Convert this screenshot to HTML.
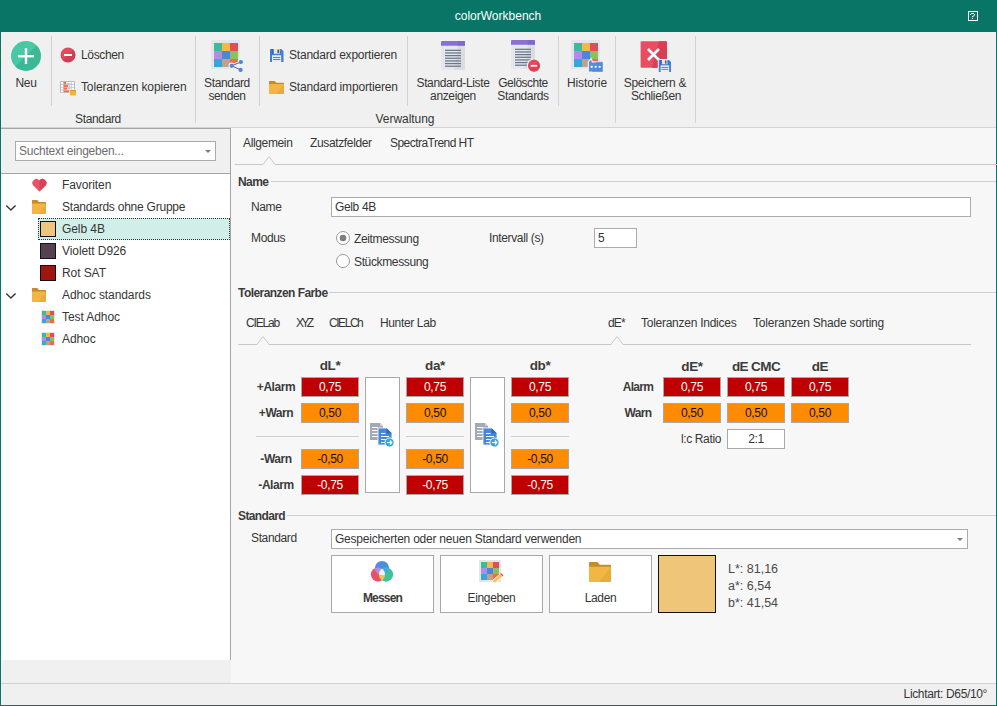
<!DOCTYPE html>
<html><head><meta charset="utf-8">
<style>
*{box-sizing:border-box}
html,body{margin:0;padding:0}
body{width:997px;height:706px;position:relative;overflow:hidden;background:#087566;font-family:"Liberation Sans",sans-serif;font-size:12px;letter-spacing:-0.36px;color:#363636}
.a{position:absolute}
.t{position:absolute;line-height:14px;white-space:nowrap}
.c{text-align:center}
.b{font-weight:bold;color:#3c3c3c}
.sep{position:absolute;width:1px;background:#d2d2d2}
.hl{position:absolute;height:1px;background:#cfcfcf}
.box{position:absolute;width:58px;height:20px;border:1px solid #a8a8a8;text-align:center;line-height:18px;font-size:12px}
.r{background:#c00000;color:#fff}
.o{background:#ff8c00;color:#111}
.inp{position:absolute;background:#fff;border:1px solid #ababab}
.grid{position:absolute;display:grid;grid-template-columns:repeat(3,1fr);grid-template-rows:repeat(3,1fr)}
.grid i{display:block}
</style></head><body>
<!-- title bar -->
<div class="a" style="left:0;top:0;width:997px;height:32px;background:#087566"></div>
<div class="t c" style="left:398px;top:9px;width:200px;color:#fff;font-size:12px;letter-spacing:0">colorWorkbench</div>
<svg class="a" style="left:968px;top:11px" width="10" height="10" viewBox="0 0 10 10" >
 <rect x="0.5" y="0.5" width="9" height="9" fill="none" stroke="#fff"/>
 <g fill="#fff"><rect x="3" y="2" width="3" height="1"/><rect x="6" y="3" width="1" height="1.5"/><rect x="5" y="4.5" width="1" height="1"/><rect x="4" y="5" width="1" height="1.2"/><rect x="4" y="7" width="1" height="1"/><rect x="2" y="3" width="1" height="1"/></g>
</svg>

<!-- ribbon -->
<div class="a" style="left:1px;top:32px;width:995px;height:95px;background:#f0f0f0"></div>
<div class="a" style="left:1px;top:127px;width:995px;height:1px;background:#d4d4d4"></div>

<div class="sep" style="left:51px;top:36px;height:70px"></div>
<div class="sep" style="left:195px;top:36px;height:87px"></div>
<div class="sep" style="left:259px;top:36px;height:70px"></div>
<div class="sep" style="left:407px;top:36px;height:70px"></div>
<div class="sep" style="left:558px;top:36px;height:70px"></div>
<div class="sep" style="left:615px;top:36px;height:87px"></div>
<div class="sep" style="left:695px;top:36px;height:87px"></div>

<!-- Neu -->
<svg class="a" style="left:11px;top:41px" width="30" height="30" viewBox="0 0 30 30">
 <circle cx="15" cy="15" r="15" fill="#47c9a5"/>
 <path d="M25.6 4.4 A15 15 0 0 1 4.4 25.6 Z" fill="#3cb896"/>
 <rect x="7" y="14" width="16" height="2.4" fill="#fff"/><rect x="13.8" y="7" width="2.4" height="16" fill="#fff"/>
</svg>
<div class="t c" style="left:6px;top:76px;width:40px">Neu</div>

<!-- Löschen -->
<svg class="a" style="left:60px;top:47px" width="16" height="16" viewBox="0 0 16 16">
 <circle cx="8" cy="8" r="7.5" fill="#e4495c"/><path d="M13.3 2.7 A7.5 7.5 0 0 1 2.7 13.3Z" fill="#d13f52"/>
 <rect x="4" y="7" width="8" height="2" fill="#fff"/>
</svg>
<div class="t" style="left:81px;top:48px">Löschen</div>

<!-- Toleranzen kopieren -->
<svg class="a" style="left:60px;top:81px" width="17" height="15" viewBox="0 0 17 15">
 <rect x="0" y="0" width="15" height="12" rx="1.2" fill="#b3bac5"/>
 <g fill="#fff"><rect x="1" y="1" width="13" height="2.2"/><rect x="1" y="3.9" width="13" height="2"/><rect x="1" y="6.6" width="13" height="2"/><rect x="1" y="9.4" width="13" height="1.8"/></g>
 <g fill="#b9c0ca"><rect x="3" y="1" width="0.6" height="10.2"/><rect x="11" y="1" width="0.6" height="10.2"/></g>
 <g fill="#f26b4a"><rect x="3.6" y="1" width="2.6" height="2.2"/><rect x="3.6" y="3.9" width="4.6" height="2"/><rect x="3.6" y="6.6" width="3.6" height="2"/><rect x="3.6" y="9.4" width="5.4" height="1.8"/></g>
 <g fill="#9aa2ae"><rect x="7" y="2" width="3.5" height="0.6"/><rect x="9" y="4.6" width="1.5" height="0.8"/><rect x="8" y="7.4" width="2.5" height="0.6"/></g>
 <rect x="9.5" y="8.5" width="7.5" height="6.5" fill="#f0f0f0"/>
 <path d="M10 9 H12.5 L13.2 9.8 H16 V14.5 H10Z" fill="#f0b53c"/><rect x="10" y="9" width="6" height="1.2" fill="#d9a030"/>
</svg>
<div class="t" style="left:81px;top:80px;letter-spacing:-0.14px">Toleranzen kopieren</div>
<div class="t c" style="left:48px;top:112px;width:100px">Standard</div>

<!-- Standard senden -->
<div class="a" style="left:211px;top:40px;width:29px;height:29px;background:#e3e5ea"></div>
<div class="grid" style="left:214px;top:43px;width:24px;height:24px">
 <i style="background:#3dba97"></i><i style="background:#f5b843"></i><i style="background:#e14b5a"></i>
 <i style="background:#b18de6"></i><i style="background:#4a86d9"></i><i style="background:#8bc15a"></i>
 <i style="background:#33a9d9"></i><i style="background:#c4a186"></i><i style="background:#ee6a4a"></i>
</div>
<svg class="a" style="left:228px;top:58px" width="16" height="15" viewBox="0 0 16 15">
 <g stroke="#f0f0f0" stroke-width="2" fill="#f0f0f0"><path d="M3.7 7.8 L12.9 4 L12.6 11.9Z" stroke-width="3"/><circle cx="3.7" cy="7.8" r="2.2"/><circle cx="12.9" cy="4" r="2.2"/><circle cx="12.6" cy="11.9" r="2.2"/></g>
 <path d="M3.7 7.8 L12.9 4 M3.7 7.8 L12.6 11.9" stroke="#3d5a80" stroke-width="0.9" fill="none"/>
 <circle cx="3.7" cy="7.8" r="2.1" fill="#4a86dc"/><circle cx="12.9" cy="4" r="2.1" fill="#4a86dc"/><circle cx="12.6" cy="11.9" r="2.1" fill="#4a86dc"/>
</svg>
<div class="t c" style="left:187px;top:76px;width:80px">Standard</div>
<div class="t c" style="left:187px;top:89px;width:80px">senden</div>

<!-- export/import -->
<svg class="a" style="left:270px;top:49px" width="14" height="13" viewBox="0 0 14 13">
 <path d="M0 0 H11.2 L13.5 2.3 V13 H0Z" fill="#3f7ed8"/><rect x="1.8" y="0" width="2" height="5" fill="#2f69bd"/>
 <rect x="3.8" y="0" width="6" height="4.8" fill="#e3e6ec"/><rect x="7.4" y="0.6" width="1.7" height="3.6" fill="#555b66"/>
 <rect x="2" y="6.2" width="9.2" height="6.8" fill="#e8ebf0"/><rect x="3" y="8" width="7.2" height="1" fill="#6d7a8f"/><rect x="3" y="10" width="7.2" height="1" fill="#6d7a8f"/>
</svg>
<div class="t" style="left:289px;top:48px;letter-spacing:-0.21px">Standard exportieren</div>
<svg class="a" style="left:269px;top:81px" width="15" height="13" viewBox="0 0 14 14" preserveAspectRatio="none">
 <path d="M0 0.3 Q0 0 0.3 0 H5.3 L6.9 1.9 H13.7 Q14 1.9 14 2.2 V4 H0Z" fill="#c58b2c"/>
 <rect x="0" y="3.4" width="14" height="10.6" rx="0.3" fill="#f3b642"/>
 <path d="M14 3.4 V14 H6.5 Z" fill="#e4a838" opacity="0.7"/>
</svg>
<div class="t" style="left:289px;top:80px;letter-spacing:-0.16px">Standard importieren</div>

<!-- Standard-Liste -->
<svg class="a" style="left:441px;top:41px" width="24" height="29" viewBox="0 0 24 29">
 <rect x="0" y="0" width="24" height="29" rx="1" fill="#e4e7eb"/><path d="M17 4.7 H24 V28 Q24 29 23 29 H13Z" fill="#d9dce1"/><path d="M0 1 Q0 0 1 0 H23 Q24 0 24 1 V4.7 H0Z" fill="#8a6fd8"/><path d="M17 0 H23 Q24 0 24 1 V4.7 H16.6Z" fill="#7b5fcb" opacity="0.6"/><g fill="#6b7689"><rect x="4" y="8.70" width="16" height="1.25"/><rect x="4" y="11.35" width="16" height="1.25"/><rect x="4" y="14.00" width="16" height="1.25"/><rect x="4" y="16.65" width="16" height="1.25"/><rect x="4" y="19.30" width="16" height="1.25"/><rect x="4" y="21.95" width="16" height="1.25"/><rect x="4" y="24.60" width="16" height="1.25"/></g>
</svg>
<div class="t c" style="left:403px;top:76px;width:100px">Standard-Liste</div>
<div class="t c" style="left:403px;top:89px;width:100px">anzeigen</div>

<!-- Gelöschte -->
<svg class="a" style="left:511px;top:40px" width="31" height="33" viewBox="0 0 31 33">
 <rect x="0" y="0" width="24" height="29" rx="1" fill="#e4e7eb"/><path d="M17 4.7 H24 V28 Q24 29 23 29 H13Z" fill="#d9dce1"/><path d="M0 1 Q0 0 1 0 H23 Q24 0 24 1 V4.7 H0Z" fill="#8a6fd8"/><path d="M17 0 H23 Q24 0 24 1 V4.7 H16.6Z" fill="#7b5fcb" opacity="0.6"/><g fill="#6b7689"><rect x="4" y="8.70" width="16" height="1.25"/><rect x="4" y="11.35" width="16" height="1.25"/><rect x="4" y="14.00" width="16" height="1.25"/><rect x="4" y="16.65" width="16" height="1.25"/><rect x="4" y="19.30" width="16" height="1.25"/><rect x="4" y="21.95" width="16" height="1.25"/><rect x="4" y="24.60" width="16" height="1.25"/></g>
 <circle cx="23" cy="25.7" r="7.2" fill="#f0f0f0"/><circle cx="23" cy="25.7" r="6.1" fill="#e4495c"/><path d="M27.3 21.4 A6.1 6.1 0 0 1 18.7 30Z" fill="#d63f52" opacity="0.7"/><rect x="19.8" y="24.9" width="6.4" height="1.7" fill="#fff"/>
</svg>
<div class="t c" style="left:473px;top:76px;width:100px;letter-spacing:-0.5px">Gelöschte</div>
<div class="t c" style="left:473px;top:89px;width:100px">Standards</div>

<!-- Historie -->
<div class="a" style="left:571px;top:40px;width:29px;height:29px;background:#e3e5ea"></div>
<div class="grid" style="left:574px;top:43px;width:24px;height:24px">
 <i style="background:#3dba97"></i><i style="background:#f5b843"></i><i style="background:#e14b5a"></i>
 <i style="background:#b18de6"></i><i style="background:#4a86d9"></i><i style="background:#8bc15a"></i>
 <i style="background:#33a9d9"></i><i style="background:#c4a186"></i><i style="background:#ee6a4a"></i>
</div>
<svg class="a" style="left:587px;top:57px" width="18" height="17" viewBox="0 0 18 17">
 <path d="M1.3 4.8 L4.2 1.6 L5.4 4.8 H15.2 Q16 4.8 16 5.6 V14.2 Q16 15 15.2 15 H2.1 Q1.3 15 1.3 14.2Z" fill="#5590e0" stroke="#f0f0f0" stroke-width="1.2"/>
 <path d="M9 4.8 H15.2 Q16 4.8 16 5.6 V14.2 Q16 15 15.2 15 H5Z" fill="#4a86d9" opacity="0.6"/>
 <circle cx="4.7" cy="9.8" r="1.15" fill="#fff"/><circle cx="8.7" cy="9.8" r="1.15" fill="#fff"/><circle cx="12.7" cy="9.8" r="1.15" fill="#fff"/>
</svg>
<div class="t c" style="left:547px;top:76px;width:80px;letter-spacing:-0.06px">Historie</div>

<!-- Speichern & Schließen -->
<svg class="a" style="left:640px;top:41px" width="32" height="32" viewBox="0 0 32 32">
 <rect x="0.6" y="0.2" width="26.4" height="26.6" rx="1" fill="#e94d62"/><path d="M19 0.2 H26 Q27 0.2 27 1.2 V25.8 Q27 26.8 26 26.8 H12Z" fill="#d83e54"/>
 <path d="M8 8 L19 19 M19 8 L8 19" stroke="#fff" stroke-width="2.6"/>
 <rect x="17.8" y="18" width="13.2" height="14" fill="#f0f0f0"/>
 <path d="M18.8 19 H29 L31 21 V31 H18.8Z" fill="#3f7ed8"/><rect x="20.3" y="19" width="1.6" height="4.5" fill="#2f69bd"/>
 <rect x="21.9" y="19" width="5.5" height="4.2" fill="#e3e6ec"/><rect x="25" y="19.5" width="1.5" height="3.2" fill="#555b66"/>
 <rect x="20.6" y="24.4" width="8.6" height="6.6" fill="#e8ebf0"/><rect x="21.5" y="26" width="6.8" height="0.9" fill="#6d7a8f"/><rect x="21.5" y="27.9" width="6.8" height="0.9" fill="#6d7a8f"/>
</svg>
<div class="t c" style="left:605px;top:76px;width:100px;letter-spacing:-0.24px">Speichern &amp;</div>
<div class="t c" style="left:606px;top:89px;width:100px">Schließen</div>
<div class="t c" style="left:355px;top:112px;width:100px;letter-spacing:-0.04px">Verwaltung</div>

<!-- main area backgrounds -->
<div class="a" style="left:1px;top:128px;width:230px;height:1px;background:#a5a5a5"></div>
<div class="a" style="left:230px;top:128px;width:1px;height:532px;background:#a5a5a5"></div>
<div class="a" style="left:1px;top:129px;width:229px;height:44px;background:#f0f0f0"></div>
<div class="a" style="left:1px;top:173px;width:229px;height:1px;background:#a5a5a5"></div>
<div class="a" style="left:1px;top:174px;width:229px;height:486px;background:#fff"></div>
<div class="a" style="left:1px;top:660px;width:230px;height:23px;background:#f0f0f0"></div>
<div class="a" style="left:231px;top:128px;width:765px;height:555px;background:#f7f7f7"></div>

<!-- status bar -->
<div class="a" style="left:1px;top:683px;width:995px;height:1px;background:#d0d0d0"></div>
<div class="a" style="left:1px;top:684px;width:995px;height:21px;background:#f0f0f0"></div>
<div class="t" style="left:887px;top:687px;width:100px;text-align:right">Lichtart: D65/10°</div>

<!-- left panel -->
<div class="inp" style="left:15px;top:141px;width:201px;height:20px"></div>
<div class="t" style="left:19px;top:144px;color:#6d6d6d;letter-spacing:-0.24px">Suchtext eingeben...</div>
<div class="a" style="left:205px;top:150px;width:0;height:0;border-left:3.5px solid transparent;border-right:3.5px solid transparent;border-top:3px solid #7a7a7a"></div>

<svg class="a" style="left:31px;top:178px" width="17" height="15" viewBox="0 0 17 15">
 <defs><clipPath id="hr"><rect x="8.4" y="0" width="9" height="15"/></clipPath></defs>
 <path d="M8.4 13.6 L2.2 7.4 A3.9 3.9 0 0 1 8.4 2.6 A3.9 3.9 0 0 1 14.6 7.4 Z" fill="#ea5367"/>
 <path d="M8.4 13.6 L2.2 7.4 A3.9 3.9 0 0 1 8.4 2.6 A3.9 3.9 0 0 1 14.6 7.4 Z" fill="#d84457" clip-path="url(#hr)"/>
</svg>
<div class="t" style="left:62px;top:178px;letter-spacing:-0.08px">Favoriten</div>

<svg class="a" style="left:5px;top:204px" width="12" height="8" viewBox="0 0 12 8"><path d="M1.2 1.4 L5.9 6 L10.6 1.4" stroke="#3a3a3a" stroke-width="1.45" fill="none"/></svg>
<svg class="a" style="left:32px;top:200px" width="14" height="14" viewBox="0 0 14 14" preserveAspectRatio="none">
 <path d="M0 0.3 Q0 0 0.3 0 H5.3 L6.9 1.9 H13.7 Q14 1.9 14 2.2 V4 H0Z" fill="#c58b2c"/>
 <rect x="0" y="3.4" width="14" height="10.6" rx="0.3" fill="#f3b642"/>
 <path d="M14 3.4 V14 H6.5 Z" fill="#e4a838" opacity="0.7"/>
</svg>
<div class="t" style="left:62px;top:200px;letter-spacing:-0.23px">Standards ohne Gruppe</div>

<div class="a" style="left:38px;top:218px;width:192px;height:22px;background:#d1eee9;border:1px dotted #333"></div>
<div class="a" style="left:40px;top:221px;width:16px;height:16px;background:#f0c67c;border:1.5px solid #111"></div>
<div class="t" style="left:62px;top:222px;letter-spacing:-0.08px">Gelb 4B</div>
<div class="a" style="left:40px;top:243px;width:16px;height:16px;background:#55414f;border:1.5px solid #111"></div>
<div class="t" style="left:62px;top:244px;letter-spacing:-0.08px">Violett D926</div>
<div class="a" style="left:40px;top:265px;width:16px;height:16px;background:#a0150f;border:1.5px solid #111"></div>
<div class="t" style="left:62px;top:266px;letter-spacing:-0.08px">Rot SAT</div>

<svg class="a" style="left:5px;top:292px" width="12" height="8" viewBox="0 0 12 8"><path d="M1.2 1.4 L5.9 6 L10.6 1.4" stroke="#3a3a3a" stroke-width="1.45" fill="none"/></svg>
<svg class="a" style="left:32px;top:288px" width="14" height="14" viewBox="0 0 14 14" preserveAspectRatio="none">
 <path d="M0 0.3 Q0 0 0.3 0 H5.3 L6.9 1.9 H13.7 Q14 1.9 14 2.2 V4 H0Z" fill="#c58b2c"/>
 <rect x="0" y="3.4" width="14" height="10.6" rx="0.3" fill="#f3b642"/>
 <path d="M14 3.4 V14 H6.5 Z" fill="#e4a838" opacity="0.7"/>
</svg>
<div class="t" style="left:62px;top:288px;letter-spacing:-0.08px">Adhoc standards</div>

<div class="a" style="left:41px;top:310px;width:14px;height:14px;background:#e3e5ea"></div>
<div class="grid" style="left:42px;top:311px;width:12px;height:12px">
 <i style="background:#3dba97"></i><i style="background:#f5b843"></i><i style="background:#e14b5a"></i>
 <i style="background:#b18de6"></i><i style="background:#4a86d9"></i><i style="background:#8bc15a"></i>
 <i style="background:#33a9d9"></i><i style="background:#c4a186"></i><i style="background:#ee6a4a"></i>
</div>
<div class="t" style="left:62px;top:310px;letter-spacing:-0.08px">Test Adhoc</div>
<div class="a" style="left:41px;top:332px;width:14px;height:14px;background:#e3e5ea"></div>
<div class="grid" style="left:42px;top:333px;width:12px;height:12px">
 <i style="background:#3dba97"></i><i style="background:#f5b843"></i><i style="background:#e14b5a"></i>
 <i style="background:#b18de6"></i><i style="background:#4a86d9"></i><i style="background:#8bc15a"></i>
 <i style="background:#33a9d9"></i><i style="background:#c4a186"></i><i style="background:#ee6a4a"></i>
</div>
<div class="t" style="left:62px;top:332px;letter-spacing:-0.08px">Adhoc</div>

<!-- RIGHT CONTENT -->
<div class="t" style="left:243px;top:136px">Allgemein</div>
<div class="t" style="left:310px;top:136px">Zusatzfelder</div>
<div class="t" style="left:390px;top:136px;letter-spacing:-0.54px">SpectraTrend HT</div>
<svg class="a" style="left:231px;top:150px" width="766" height="20" viewBox="0 0 766 20">
 <path d="M4 14.5 H32 L38 6.5 L44 14.5 H766" stroke="#c8c8c8" stroke-width="1" fill="none"/>
</svg>

<div class="t b" style="left:238px;top:175px;letter-spacing:-0.6px">Name</div>
<div class="hl" style="left:271px;top:181px;width:725px"></div>
<div class="t" style="left:251px;top:200px">Name</div>
<div class="inp" style="left:331px;top:197px;width:640px;height:20px"></div>
<div class="t" style="left:335px;top:200px">Gelb 4B</div>
<div class="t" style="left:251px;top:231px">Modus</div>
<svg class="a" style="left:336px;top:231px" width="14" height="37" viewBox="0 0 14 37">
 <circle cx="7" cy="7" r="6.5" fill="#fff" stroke="#9a9a9a"/><circle cx="7" cy="7" r="3.3" fill="#7d7d7d"/>
 <circle cx="7" cy="30" r="6.5" fill="#fff" stroke="#9a9a9a"/>
</svg>
<div class="t" style="left:354px;top:232px">Zeitmessung</div>
<div class="t" style="left:354px;top:255px">Stückmessung</div>
<div class="t" style="left:489px;top:231px">Intervall (s)</div>
<div class="inp" style="left:594px;top:228px;width:43px;height:20px"></div>
<div class="t" style="left:598px;top:231px">5</div>

<div class="t b" style="left:238px;top:286px;letter-spacing:-0.56px">Toleranzen Farbe</div>
<div class="hl" style="left:329px;top:292px;width:667px"></div>

<div class="t" style="left:246px;top:316px;letter-spacing:-1.16px">CIELab</div>
<div class="t" style="left:296px;top:316px;letter-spacing:-2.6px">XYZ</div>
<div class="t" style="left:329px;top:316px;letter-spacing:-1.45px">CIELCh</div>
<div class="t" style="left:380px;top:316px">Hunter Lab</div>
<div class="t" style="left:608px;top:316px;letter-spacing:-0.9px">dE*</div>
<div class="t" style="left:641px;top:316px;letter-spacing:-0.26px">Toleranzen Indices</div>
<div class="t" style="left:753px;top:316px;letter-spacing:-0.21px">Toleranzen Shade sorting</div>
<svg class="a" style="left:231px;top:330px" width="766" height="20" viewBox="0 0 766 20">
 <path d="M7 14.5 H26 L32 6.5 L38 14.5 H380 L386 6.5 L392 14.5 H740" stroke="#c8c8c8" stroke-width="1" fill="none"/>
</svg>

<div class="t c b" style="left:300px;top:359px;width:60px;font-size:13.5px;letter-spacing:-0.4px">dL*</div>
<div class="t c b" style="left:405px;top:359px;width:60px;font-size:13.5px;letter-spacing:-0.4px">da*</div>
<div class="t c b" style="left:510px;top:359px;width:60px;font-size:13.5px;letter-spacing:-0.4px">db*</div>

<div class="t c b" style="left:246px;top:380px;width:60px;letter-spacing:-0.45px">+Alarm</div>
<div class="t c b" style="left:246px;top:406px;width:60px;letter-spacing:-0.45px">+Warn</div>
<div class="t c b" style="left:246px;top:452px;width:60px;letter-spacing:-0.45px">-Warn</div>
<div class="t c b" style="left:246px;top:478px;width:60px;letter-spacing:-0.45px">-Alarm</div>

<div class="hl" style="left:256px;top:436px;width:103px"></div>
<div class="hl" style="left:406px;top:436px;width:58px"></div>
<div class="hl" style="left:511px;top:436px;width:58px"></div>

<div class="box r" style="left:301px;top:377px">0,75</div>
<div class="box o" style="left:301px;top:403px">0,50</div>
<div class="box o" style="left:301px;top:449px">-0,50</div>
<div class="box r" style="left:301px;top:475px">-0,75</div>
<div class="box r" style="left:406px;top:377px">0,75</div>
<div class="box o" style="left:406px;top:403px">0,50</div>
<div class="box o" style="left:406px;top:449px">-0,50</div>
<div class="box r" style="left:406px;top:475px">-0,75</div>
<div class="box r" style="left:511px;top:377px">0,75</div>
<div class="box o" style="left:511px;top:403px">0,50</div>
<div class="box o" style="left:511px;top:449px">-0,50</div>
<div class="box r" style="left:511px;top:475px">-0,75</div>

<div class="a" style="left:365px;top:377px;width:35px;height:116px;background:#fff;border:1px solid #a8a8a8"></div>
<div class="a" style="left:470px;top:377px;width:35px;height:116px;background:#fff;border:1px solid #a8a8a8"></div>
<svg class="a" style="left:370px;top:422px" width="24" height="26" viewBox="0 0 24 26">
 <path d="M0 1 H10 L13 4 V18 H0Z" fill="#a3a9b5"/><path d="M10 1 L13 4 H10Z" fill="#cdd2d9"/><g fill="#fff"><rect x="2" y="5" width="6" height="1"/><rect x="2" y="8" width="6" height="1"/><rect x="2" y="11" width="6" height="1"/><rect x="2" y="14" width="6" height="1"/></g>
 <path d="M8 6 H16.5 L22 11.5 V23 H8Z" fill="#4a86d9" stroke="#fff" stroke-width="0.8"/><path d="M16.5 6 L22 11.5 H16.5Z" fill="#3169bd"/><g fill="#fff"><rect x="11" y="11" width="4.5" height="1"/><rect x="11" y="14" width="8" height="1"/><rect x="11" y="17" width="7" height="1"/><rect x="11" y="20" width="5" height="1"/></g>
 <circle cx="19.5" cy="20.5" r="4.6" fill="#33a9d9" stroke="#fff" stroke-width="0.9"/><path d="M17 20.5 H21.8 M19.9 18.5 L21.9 20.5 L19.9 22.5" stroke="#fff" stroke-width="1.1" fill="none"/>
</svg>
<svg class="a" style="left:475px;top:422px" width="24" height="26" viewBox="0 0 24 26">
 <path d="M0 1 H10 L13 4 V18 H0Z" fill="#a3a9b5"/><path d="M10 1 L13 4 H10Z" fill="#cdd2d9"/><g fill="#fff"><rect x="2" y="5" width="6" height="1"/><rect x="2" y="8" width="6" height="1"/><rect x="2" y="11" width="6" height="1"/><rect x="2" y="14" width="6" height="1"/></g>
 <path d="M8 6 H16.5 L22 11.5 V23 H8Z" fill="#4a86d9" stroke="#fff" stroke-width="0.8"/><path d="M16.5 6 L22 11.5 H16.5Z" fill="#3169bd"/><g fill="#fff"><rect x="11" y="11" width="4.5" height="1"/><rect x="11" y="14" width="8" height="1"/><rect x="11" y="17" width="7" height="1"/><rect x="11" y="20" width="5" height="1"/></g>
 <circle cx="19.5" cy="20.5" r="4.6" fill="#33a9d9" stroke="#fff" stroke-width="0.9"/><path d="M17 20.5 H21.8 M19.9 18.5 L21.9 20.5 L19.9 22.5" stroke="#fff" stroke-width="1.1" fill="none"/>
</svg>

<!-- dE -->
<div class="t c b" style="left:662px;top:360px;width:60px;font-size:13.5px;letter-spacing:-0.4px">dE*</div>
<div class="t c b" style="left:721px;top:360px;width:70px;font-size:13.5px;letter-spacing:-0.6px">dE CMC</div>
<div class="t c b" style="left:790px;top:360px;width:60px;font-size:13.5px;letter-spacing:-0.4px">dE</div>
<div class="t c b" style="left:608px;top:380px;width:60px;letter-spacing:-0.66px">Alarm</div>
<div class="t c b" style="left:608px;top:406px;width:60px;letter-spacing:-0.66px">Warn</div>
<div class="box r" style="left:663px;top:377px">0,75</div>
<div class="box r" style="left:727px;top:377px">0,75</div>
<div class="box r" style="left:791px;top:377px">0,75</div>
<div class="box o" style="left:663px;top:403px">0,50</div>
<div class="box o" style="left:727px;top:403px">0,50</div>
<div class="box o" style="left:791px;top:403px">0,50</div>
<div class="t" style="left:621px;top:432px;width:100px;text-align:right">l:c Ratio</div>
<div class="box" style="left:727px;top:429px;height:20px;background:#fff;line-height:18px">2:1</div>

<!-- Standard -->
<div class="t b" style="left:238px;top:509px;letter-spacing:-0.62px">Standard</div>
<div class="hl" style="left:287px;top:515px;width:709px"></div>
<div class="t" style="left:251px;top:531px">Standard</div>
<div class="inp" style="left:331px;top:529px;width:637px;height:20px"></div>
<div class="t" style="left:335px;top:532px;letter-spacing:-0.23px">Gespeicherten oder neuen Standard verwenden</div>
<div class="a" style="left:957px;top:538px;width:0;height:0;border-left:3px solid transparent;border-right:3px solid transparent;border-top:3px solid #7a7a7a"></div>

<div class="inp" style="left:331px;top:555px;width:103px;height:58px;border-color:#a8a8a8"></div>
<div class="inp" style="left:440px;top:555px;width:103px;height:58px;border-color:#a8a8a8"></div>
<div class="inp" style="left:549px;top:555px;width:103px;height:58px;border-color:#a8a8a8"></div>
<svg class="a" style="left:366px;top:556px" width="32" height="30" viewBox="0 0 32 30">
 <defs><clipPath id="cr"><circle cx="12" cy="18.6" r="7.1"/></clipPath><clipPath id="cg"><circle cx="20" cy="18.6" r="7.1"/></clipPath></defs>
 <circle cx="16" cy="12.1" r="7.1" fill="#4f8de0"/>
 <circle cx="12" cy="18.6" r="7.1" fill="#ea5064"/>
 <circle cx="20" cy="18.6" r="7.1" fill="#3fc19b"/>
 <g clip-path="url(#cr)"><circle cx="16" cy="12.1" r="7.1" fill="#b08ee8"/><circle cx="20" cy="18.6" r="7.1" fill="#f7c14c"/></g>
 <g clip-path="url(#cg)"><circle cx="16" cy="12.1" r="7.1" fill="#3fb0dc"/></g>
 <g clip-path="url(#cr)"><g clip-path="url(#cg)"><circle cx="16" cy="12.1" r="7.1" fill="#eeeef3"/></g></g>
</svg>
<div class="t c b" style="left:331px;top:591px;width:103px;letter-spacing:-0.8px">Messen</div>
<div class="a" style="left:479px;top:560px;width:22px;height:22px;background:#e3e5ea"></div>
<div class="grid" style="left:481px;top:562px;width:18px;height:18px">
 <i style="background:#3dba97"></i><i style="background:#f5b843"></i><i style="background:#e14b5a"></i>
 <i style="background:#b18de6"></i><i style="background:#4a86d9"></i><i style="background:#8bc15a"></i>
 <i style="background:#33a9d9"></i><i style="background:#c4a186"></i><i style="background:#ee6a4a"></i>
</div>
<svg class="a" style="left:491px;top:573px" width="13" height="11" viewBox="0 0 13 11">
 <path d="M1 10 L2 7 L9 1 L11.5 3.5 L4.5 9.5Z" fill="#f5c35a" stroke="#fff" stroke-width="0.8"/><path d="M9 1 L11.5 3.5 L12.5 2.5 L10 0Z" fill="#e14b5a"/>
</svg>
<div class="t c" style="left:440px;top:591px;width:103px">Eingeben</div>
<svg class="a" style="left:589px;top:562px" width="22" height="20" viewBox="0 0 14 14" preserveAspectRatio="none">
 <path d="M0 0.3 Q0 0 0.3 0 H5.3 L6.9 1.9 H13.7 Q14 1.9 14 2.2 V4 H0Z" fill="#c58b2c"/>
 <rect x="0" y="3.4" width="14" height="10.6" rx="0.3" fill="#f3b642"/>
 <path d="M14 3.4 V14 H6.5 Z" fill="#e4a838" opacity="0.7"/>
</svg>
<div class="t c" style="left:549px;top:591px;width:103px">Laden</div>

<div class="a" style="left:658px;top:555px;width:58px;height:58px;background:#efc57a;border:1.5px solid #111"></div>
<div class="t" style="left:728px;top:562px;font-size:12.5px;letter-spacing:0;color:#4a4a4a">L*: 81,16</div>
<div class="t" style="left:728px;top:579px;font-size:12.5px;letter-spacing:0;color:#4a4a4a">a*: 6,54</div>
<div class="t" style="left:728px;top:596px;font-size:12.5px;letter-spacing:0;color:#4a4a4a">b*: 41,54</div>

</body></html>
